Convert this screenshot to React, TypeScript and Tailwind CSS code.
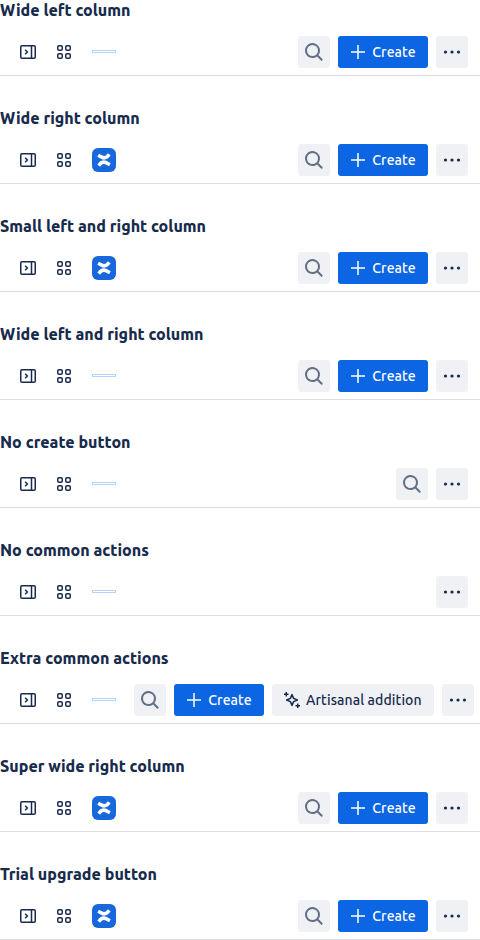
import React from 'react';

type Row = {
  title: string;
  logo?: boolean;
  search?: boolean;
  create?: boolean;
  extra?: boolean;
};

const rows: Row[] = [
  { title: 'Wide left column', search: true, create: true },
  { title: 'Wide right column', logo: true, search: true, create: true },
  { title: 'Small left and right column', logo: true, search: true, create: true },
  { title: 'Wide left and right column', search: true, create: true },
  { title: 'No create button', search: true },
  { title: 'No common actions' },
  { title: 'Extra common actions', search: true, create: true, extra: true },
  { title: 'Super wide right column', logo: true, search: true, create: true },
  { title: 'Trial upgrade button', logo: true, search: true, create: true },
];

function SidebarIcon() {
  return (
    <svg width="16" height="16" viewBox="0 0 16 16" fill="none" stroke="currentColor" strokeWidth="1.5">
      <rect x="0.75" y="1.75" width="14.5" height="12.5" rx="1.25" />
      <path d="M11.5 2v12M5.1 5.7 7.4 8 5.1 10.3" />
    </svg>
  );
}

function AppsIcon() {
  return (
    <svg width="16" height="16" viewBox="0 0 16 16" fill="none" stroke="currentColor" strokeWidth="1.5">
      <rect x="1.75" y="1.75" width="4.5" height="4.5" rx="1.25" />
      <rect x="9.75" y="1.75" width="4.5" height="4.5" rx="1.25" />
      <rect x="1.75" y="9.75" width="4.5" height="4.5" rx="1.25" />
      <rect x="9.75" y="9.75" width="4.5" height="4.5" rx="1.25" />
    </svg>
  );
}

const ribbon =
  'M18.3 14.9C15.6 13.6 14.2 12.3 12 12.3 9.2 12.3 7.3 13.9 5.600 16.200 5.350 16.600 5.400 16.800 5.700 17L7.900 18.400C8.200 18.600 8.400 18.600 8.600 18.300 9.700 16.800 10.500 16.100 11.800 16.100 13.200 16.100 14.600 17 16.600 18 16.900 18.150 17.200 18.100 17.300 17.800L18.600 15.500C18.700 15.200 18.600 15.050 18.300 14.900Z';

function ConfluenceLogo() {
  return (
    <svg width="24" height="24" viewBox="0 0 24 24">
      <rect width="24" height="24" rx="6" fill="#1868DB" />
      <path fill="#fff" d={ribbon} />
      <path fill="#fff" d={ribbon} transform="rotate(180 12 12)" />
    </svg>
  );
}

function SearchIcon() {
  return (
    <svg width="24" height="24" viewBox="0 0 24 24" fill="#626F86">
      <path
        fillRule="evenodd"
        d="M16.436 15.085l3.940 4.010a1 1 0 0 1-1.425 1.402l-3.938-4.006a7.500 7.500 0 1 1 1.423-1.406zM10.500 16a5.500 5.500 0 1 0 0-11 5.500 5.500 0 0 0 0 11z"
      />
    </svg>
  );
}

function PlusIcon() {
  return (
    <svg width="16" height="16" viewBox="0 0 16 16" fill="none" stroke="#fff" strokeWidth="1.5">
      <path d="M8 1v14M1 8h14" />
    </svg>
  );
}

function SparkleIcon() {
  return (
    <svg width="16" height="16" viewBox="0 0 16 16" fill="none" stroke="currentColor" strokeWidth="1.5">
      <path d="M8 2.600 9.600 6.400 13.400 8 9.600 9.600 8 13.400 6.400 9.600 2.600 8 6.400 6.400Z" strokeLinejoin="round" />
      <path d="M2.250 0v4.500M0 2.250h4.500M13.750 11.500v4.500M11.500 13.750h4.500" />
    </svg>
  );
}

function MoreButton() {
  return (
    <button className="flex size-8 shrink-0 items-center justify-center rounded-[3px] bg-[#F0F1F4]">
      <svg width="24" height="24" viewBox="0 0 24 24" fill="currentColor">
        <circle cx="5.500" cy="12" r="1.600" />
        <circle cx="12" cy="12" r="1.600" />
        <circle cx="18.500" cy="12" r="1.600" />
      </svg>
    </button>
  );
}

function Navigation({ row }: { row: Row }) {
  return (
    <nav className="flex h-12 items-center justify-between border-b border-[#DDDEE1] px-3 pt-px">
      <div className="flex w-[122px] shrink-0 items-center gap-1">
        <button className="flex size-8 items-center justify-center"><SidebarIcon /></button>
        <button className="flex size-8 items-center justify-center"><AppsIcon /></button>
        <div className="flex h-8 w-10 items-center justify-center">
          {row.logo ? <ConfluenceLogo /> : <div className="-mt-px h-[3px] w-6 border border-[#B3D4FF]" />}
        </div>
      </div>
      <div className="flex shrink-0 items-center gap-2">
        {row.search && (
          <button className="flex size-8 shrink-0 items-center justify-center rounded-[3px] bg-[#F0F1F4]">
            <SearchIcon />
          </button>
        )}
        {row.create && (
          <button className="flex h-8 w-[90px] shrink-0 items-center rounded-[3px] bg-[#0C66E4] pl-3 text-white">
            <PlusIcon />
            <span className="ml-[6.25px] text-[14px] leading-5 font-medium tracking-[0.1px]">Create</span>
          </button>
        )}
        {row.extra && (
          <button className="flex h-8 w-[162px] shrink-0 items-center rounded-[3px] bg-[#F0F1F4] pl-3">
            <SparkleIcon />
            <span className="ml-1.5 text-[14px] leading-5 font-medium tracking-[0.1px] whitespace-nowrap">Artisanal addition</span>
          </button>
        )}
        <MoreButton />
      </div>
    </nav>
  );
}

export default function App() {
  return (
    <main className="flex h-[940px] w-[480px] flex-col gap-8 overflow-hidden bg-white font-[Ubuntu,'Noto_Sans',sans-serif] text-[#172B4D]">
      {rows.map((row) => (
        <section key={row.title} className="flex flex-col gap-2">
          <h2 className="text-[16px] leading-5 font-extrabold whitespace-nowrap">{row.title}</h2>
          <Navigation row={row} />
        </section>
      ))}
    </main>
  );
}
